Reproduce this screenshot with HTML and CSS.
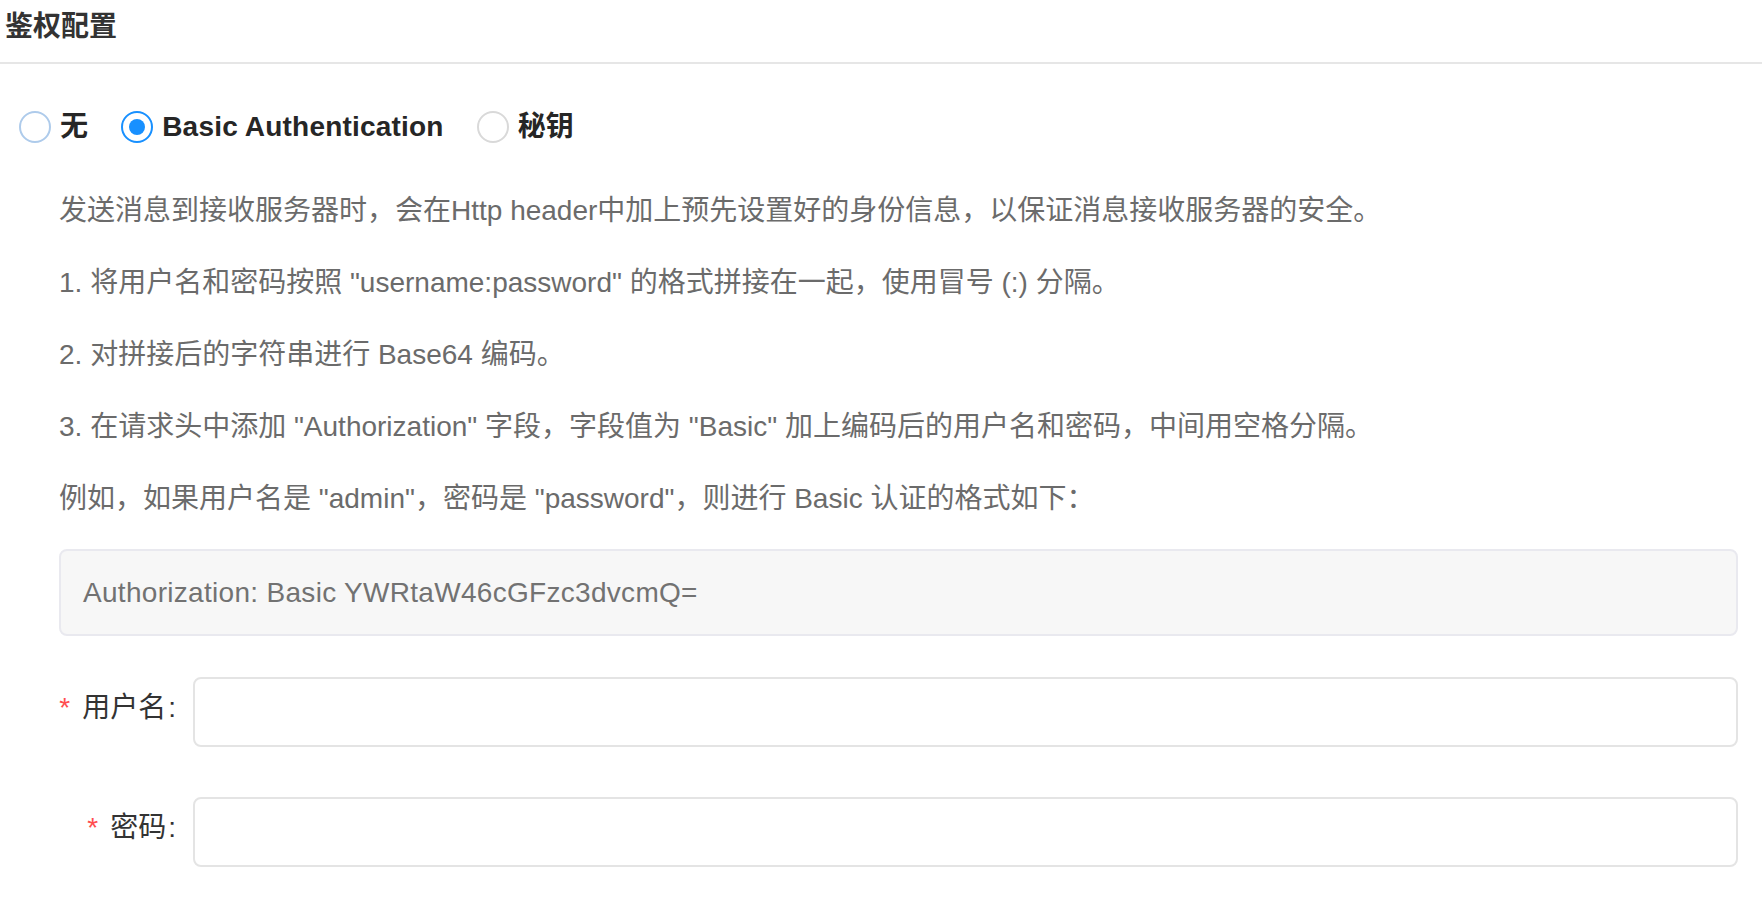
FILE: index.html
```html
<!DOCTYPE html>
<html lang="zh-CN">
<head>
  <meta charset="UTF-8" />
  <meta name="viewport" content="width=device-width, initial-scale=1.0"/>
  <title>鉴权配置</title>
  <link rel="stylesheet" href="styles.css">
</head>
<body>

  <!-- Header -->
  <div class="panel-header">
    <span class="panel-title">鉴权配置</span>
  </div>

  <div class="panel-body">
    <!-- Auth type -->
    <div class="radio-group">
      <label class="radio-item">
        <span class="radio hover"></span>
        <span class="radio-label">无</span>
      </label>
      <label class="radio-item">
        <span class="radio checked"></span>
        <span class="radio-label">Basic Authentication</span>
      </label>
      <label class="radio-item">
        <span class="radio"></span>
        <span class="radio-label">秘钥</span>
      </label>
    </div>

    <!-- Description -->
    <div class="auth-desc">
      <p>发送消息到接收服务器时，会在Http header中加上预先设置好的身份信息，以保证消息接收服务器的安全。</p>
      <p>1. 将用户名和密码按照 "username:password" 的格式拼接在一起，使用冒号 (:) 分隔。</p>
      <p>2. 对拼接后的字符串进行 Base64 编码。</p>
      <p>3. 在请求头中添加 "Authorization" 字段，字段值为 "Basic" 加上编码后的用户名和密码，中间用空格分隔。</p>
      <p>例如，如果用户名是 "admin"，密码是 "password"，则进行 Basic 认证的格式如下：</p>
      <div class="code-box">Authorization: Basic YWRtaW46cGFzc3dvcmQ=</div>
    </div>

    <!-- Form -->
    <form class="auth-form" id="auth-form">
      <div class="form-row">
        <label class="form-label" for="username"><span class="required">*</span>用户名</label>
        <input class="form-input" type="text" id="username" name="username" />
      </div>
      <div class="form-row">
        <label class="form-label" for="password"><span class="required">*</span>密码</label>
        <input class="form-input" type="password" id="password" name="password" />
      </div>
    </form>
  </div>

</body>
</html>
```

FILE: styles.css
```css
* {
  box-sizing: border-box;
}

body {
  margin: 0;
  font-family: "Liberation Sans", "Noto Sans CJK SC", sans-serif;
  font-size: 28px;
  color: #333;
  background: #fff;
}

.panel-header {
  height: 64px;
  padding: 6px 5px 0;
  border-bottom: 2px solid #e6e6e6;
}

.panel-title {
  font-weight: 700;
  line-height: 42px;
  color: #333;
}

.panel-body {
  padding: 47px 24px 40px 19px;
}

/* Radio group */
.radio-group {
  display: flex;
  align-items: center;
  height: 32px;
}

.radio-item {
  display: flex;
  align-items: center;
  margin-right: 33px;
  cursor: pointer;
}

.radio {
  position: relative;
  width: 32px;
  height: 32px;
  border: 2px solid #d9d9d9;
  border-radius: 50%;
  background: #fff;
}

.radio.hover {
  border-color: #aecbeb;
}

.radio.checked {
  border-color: #1890ff;
}

.radio.checked::after {
  content: "";
  position: absolute;
  top: 6px;
  left: 6px;
  width: 16px;
  height: 16px;
  border-radius: 50%;
  background: #1890ff;
}

.radio-label {
  padding-left: 9px;
  font-weight: 700;
  line-height: 32px;
  color: #262626;
  letter-spacing: 0.2px;
}

/* Description */
.auth-desc {
  margin: 46px 0 0 40px;
  color: #6b6b6b;
}

.auth-desc p {
  margin: 0 0 28px;
  line-height: 44px;
}

.code-box {
  display: flex;
  align-items: center;
  height: 87px;
  padding: 0 22px;
  background: #f7f7f7;
  border: 2px solid #e9e9ef;
  border-radius: 8px;
  color: #727272;
  letter-spacing: 0.3px;
}

/* Form */
.auth-form {
  margin: 41px 0 0 40px;
}

.form-row {
  display: flex;
  align-items: flex-start;
  margin-bottom: 50px;
}

.form-label {
  width: 134px;
  height: 62px;
  padding-right: 17px;
  line-height: 62px;
  text-align: right;
  color: #333;
  white-space: nowrap;
}

.form-label::after {
  content: ":";
  margin-left: 2px;
}

.required {
  margin-right: 12px;
  color: #ff4d4f;
}

.form-input {
  flex: 1;
  height: 70px;
  padding: 0 22px;
  font-size: 28px;
  font-family: inherit;
  border: 2px solid #e4e4e4;
  border-radius: 8px;
  outline: none;
}
```
